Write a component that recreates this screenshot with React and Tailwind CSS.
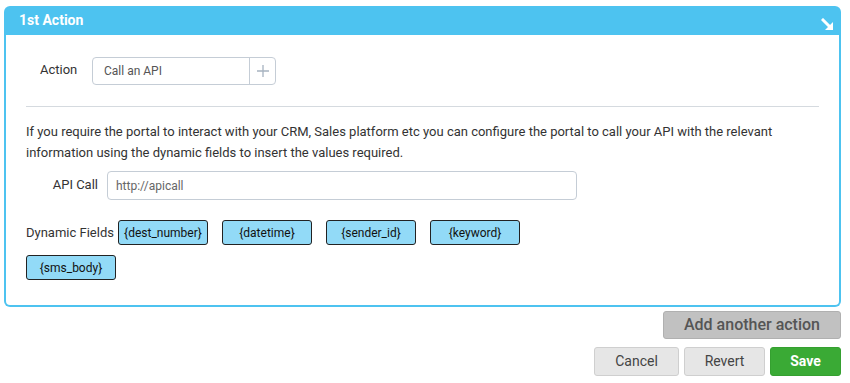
import React from "react";

const chips = ["{dest_number}", "{datetime}", "{sender_id}", "{keyword}"];

export default function App() {
  return (
    <div className="w-[850px] h-[383px] bg-white text-[#333] overflow-hidden" style={{ fontFamily: "Roboto, 'Liberation Sans', sans-serif" }}>
      <div className="ml-[4px] mt-[6px] w-[837px]">
        <div className="h-[29px] bg-[#4dc3f0] rounded-t-[6px] flex items-center justify-between pl-[15px] pr-[6px]">
          <span className="text-white font-bold text-[14px]">1st Action</span>
          <svg width="14" height="14" viewBox="0 0 14 14" className="mt-[8px]">
            <path d="M2 2 L10 10" stroke="white" strokeWidth="3" strokeLinecap="square" />
            <path d="M12 4 L12 12 L4 12 Z" fill="white" />
          </svg>
        </div>
        <div className="border-2 border-t-0 border-[#4dc3f0] rounded-b-[6px] px-[20px] pt-[22px] pb-[25px]">
          <div className="flex items-center pl-[14px]">
            <span className="text-[13px] w-[52px] -mt-[3px] text-[#333]">Action</span>
            <div className="flex h-[28px] w-[184px] border border-[#c5cdd6] rounded-[4px]">
              <div className="flex-1 flex items-center pl-[11px] text-[12px] text-[#555]">Call an API</div>
              <div className="w-[26px] border-l border-[#c5cdd6] flex items-center justify-center">
                <svg width="12" height="12" viewBox="0 0 12 12">
                  <path d="M6 0 V12 M0 6 H12" stroke="#a7b3c0" strokeWidth="1.3" />
                </svg>
              </div>
            </div>
          </div>
          <div className="h-px bg-[#d5dadf] mt-[21px]" />
          <p className="mt-[14px] text-[13px] leading-[21px] text-[#333]">
            If you require the portal to interact with your CRM, Sales platform etc you can configure the portal to call your API with the relevant information using the dynamic fields to insert the values required.
          </p>
          <div className="flex items-center mt-[8px]">
            <span className="w-[72px] text-right text-[13px] -mt-[2px]">API Call</span>
            <div className="ml-[9px] w-[470px] h-[29px] border border-[#c5cdd6] rounded-[4px] flex items-center pl-[8px] text-[12px] text-[#666]">
              http://apicall
            </div>
          </div>
          <div className="flex items-center mt-[20px]">
            <span className="text-[13px] mr-[4px]">Dynamic Fields</span>
            {chips.map((c) => (
              <div
                key={c}
                className="w-[90px] h-[25px] bg-[#92daf7] border border-[#222] rounded-[3px] flex items-center justify-center text-[12px] text-[#111] mr-[14px]"
              >
                {c}
              </div>
            ))}
          </div>
          <div className="flex mt-[10px]">
            <div className="w-[90px] h-[25px] bg-[#92daf7] border border-[#222] rounded-[3px] flex items-center justify-center text-[12px] text-[#111]">
              {"{sms_body}"}
            </div>
          </div>
        </div>
      </div>
      <div className="flex justify-end pr-[9px] mt-[4px]">
        <button className="w-[178px] h-[28px] bg-[#c1c1c1] border border-[#b0b0b0] rounded-[3px] text-[16px] font-medium text-[#555]">
          Add another action
        </button>
      </div>
      <div className="flex justify-end gap-[5px] pr-[9px] mt-[8px]">
        <button className="w-[85px] h-[29px] bg-[#e6e6e6] border border-[#cfcfcf] rounded-[3px] text-[14px] text-[#444]">Cancel</button>
        <button className="w-[81px] h-[29px] bg-[#e6e6e6] border border-[#cfcfcf] rounded-[3px] text-[14px] text-[#444]">Revert</button>
        <button className="w-[71px] h-[29px] bg-[#3aaa35] border border-[#35a030] rounded-[3px] text-[14px] font-bold text-white">Save</button>
      </div>
    </div>
  );
}
